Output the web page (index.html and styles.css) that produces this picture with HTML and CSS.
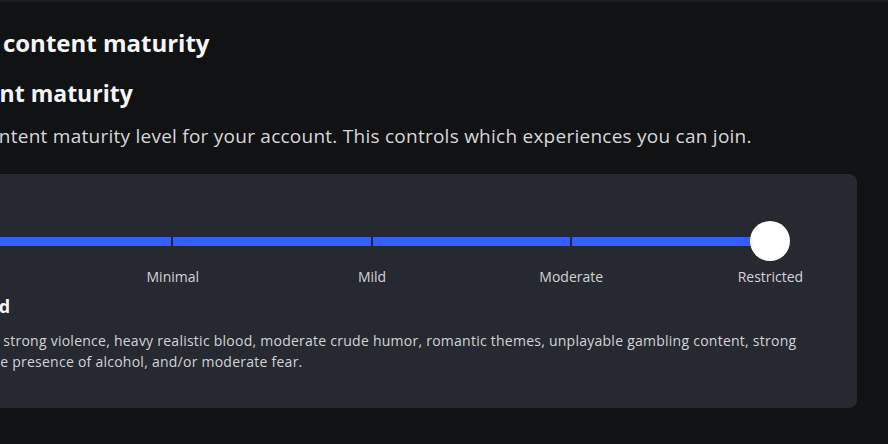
FILE: index.html
```html
<!DOCTYPE html>
<html lang="en">
<head>
<meta charset="utf-8">
<title>Content maturity</title>
<link rel="stylesheet" href="styles.css">
</head>
<body>
<main class="page">
  <h1 class="page-title">Privacy &amp; content maturity</h1>
  <section class="section">
    <h2 class="section-title">Content maturity</h2>
    <p class="section-desc">Set the content maturity level for your account. This controls which experiences you can join.</p>
    <div class="card">
      <div class="slider">
        <div class="track">
          <span class="seg"></span><span class="seg"></span><span class="seg"></span><span class="seg"></span>
        </div>
        <span class="thumb"></span>
      </div>
      <div class="labels">
        <span class="label"></span>
        <span class="label">Minimal</span>
        <span class="label">Mild</span>
        <span class="label">Moderate</span>
        <span class="label">Restricted</span>
      </div>
      <h3 class="level-title">Restricted</h3>
      <p class="level-desc">May contain strong violence, heavy realistic blood, moderate crude humor, romantic themes, unplayable gambling content, strong language, the presence of alcohol, and/or moderate fear.</p>
    </div>
  </section>
</main>
</body>
</html>
```
FILE: styles.css
```css
html, body {
  margin: 0;
  padding: 0;
}
body {
  background: #111214;
  border-top: 2px solid #1d1e21;
  width: 888px;
  height: 442px;
  overflow: hidden;
  font-family: "Open Sans", "Noto Sans", sans-serif;
  color: #f5f6f7;
}
.page {
  margin-left: -100px;
  padding-top: 25px;
}
.page-title {
  margin: 0 0 0 -15px;
  font-weight: 700;
  font-size: 24px;
  line-height: 32px;
}
.section-title {
  margin: 19px 0 0 32px;
  font-weight: 700;
  font-size: 23px;
  line-height: 30px;
}
.section-desc {
  margin: 16px 0 0 9px;
  font-size: 19px;
  letter-spacing: 0.25px;
  line-height: 24px;
  color: #d6d7da;
}
.card {
  margin-top: 26px;
  width: 957px;
  box-sizing: border-box;
  padding: 24px 24px 36px;
  background: #272930;
  border-radius: 8px;
}
.slider {
  position: relative;
  margin: 23px 0 0 49px;
  width: 797px;
  height: 40px;
  display: flex;
  align-items: center;
}
.track {
  display: flex;
  gap: 2px;
  width: 100%;
  height: 9px;
}
.seg {
  flex: 1;
  background: #335fff;
}
.thumb {
  position: absolute;
  right: -20px;
  top: 0;
  width: 40px;
  height: 40px;
  border-radius: 50%;
  background: #ffffff;
}
.labels {
  display: flex;
  margin: 6px 0 0 -50px;
  width: 996px;
}
.label {
  flex: 1;
  text-align: center;
  font-size: 14px;
  line-height: 20px;
  color: #d2d3d6;
}
.level-title {
  margin: 7px 0 0 -6px;
  font-size: 18px;
  line-height: 24px;
  font-weight: 700;
  color: #f5f6f7;
}
.level-desc {
  margin: 12px 0 0 -7px;
  font-size: 14px;
  letter-spacing: 0.25px;
  line-height: 21px;
  color: #d2d3d6;
}
```
